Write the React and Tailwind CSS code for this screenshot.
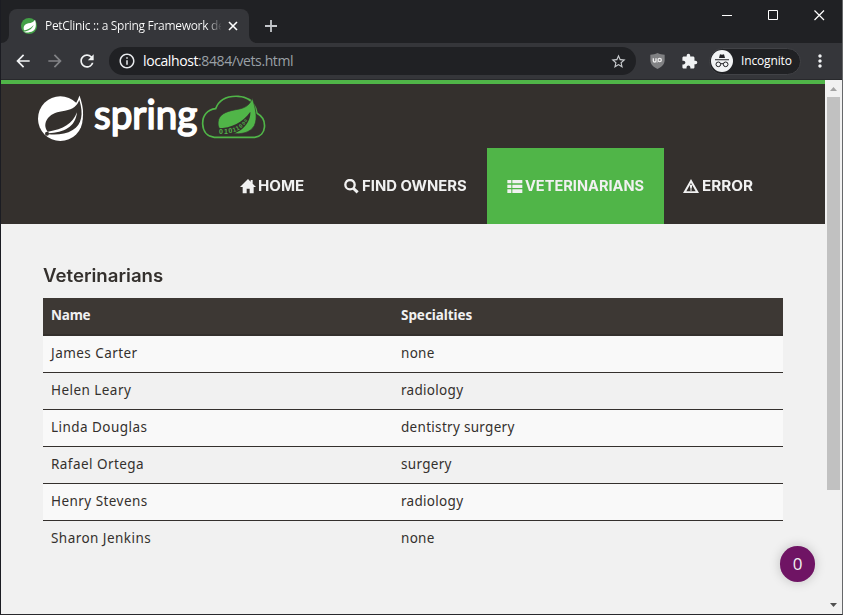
import React from 'react';
import { MdArrowBack, MdArrowForward, MdRefresh, MdInfoOutline, MdStarBorder, MdExtension, MdMoreVert } from 'react-icons/md';

const vets = [
  ['James Carter', 'none'],
  ['Helen Leary', 'radiology'],
  ['Linda Douglas', 'dentistry surgery'],
  ['Rafael Ortega', 'surgery'],
  ['Henry Stevens', 'radiology'],
  ['Sharon Jenkins', 'none'],
];

function Favicon() {
  return (
    <svg className="ml-3 h-4 w-4 shrink-0" viewBox="0 0 48 48">
      <circle cx="24" cy="24" r="24" fill="#43a047" />
      <path d="M42 5C38 13 31 14 22 16C10 19 6 26 9 37C16 36 28 33 38 21C33 34 21 40 8 41C13 45 27 44 36 39C45 33 47 20 42 5Z" fill="#fff" />
    </svg>
  );
}

function TabStrip() {
  return (
    <div className="flex h-[43px] items-start bg-[#202124]">
      <div className="flex w-2 self-stretch items-end bg-[#35363a]">
        <div className="h-full w-2 rounded-br-lg bg-[#202124]" />
      </div>
      <div className="mt-[9px] flex h-[34px] w-[240px] items-center rounded-t-lg bg-[#35363a]">
        <Favicon />
        <div className="ml-2 w-[176px] whitespace-nowrap bg-gradient-to-r from-white from-92% to-[#45464a] bg-clip-text text-[12px] leading-4 tracking-[-0.3px] text-transparent">
          PetClinic :: a Spring Framework de
        </div>
        <svg className="ml-[7px] h-[10px] w-[10px] shrink-0" viewBox="0 0 10 10" stroke="#fff" strokeWidth="1.6">
          <path d="M1 1L9 9M9 1L1 9" />
        </svg>
      </div>
      <div className="flex w-2 self-stretch bg-[#35363a]">
        <div className="h-full w-2 rounded-bl-lg bg-[#202124]" />
      </div>
      <svg className="ml-2 mt-5 h-3 w-3" viewBox="0 0 12 12" stroke="#c4c7cb" strokeWidth="1.8">
        <path d="M6 0V12M0 6H12" />
      </svg>
      <svg className="ml-auto mr-[17px] mt-[10px] h-[11px] w-[103px]" viewBox="0 0 103 11" fill="none" stroke="#fff">
        <path d="M0 5.5H10" />
        <path d="M46.5 .5H55.5V9.5H46.5Z" />
        <path d="M92.5 .5L102 10M102 .5L92.5 10" strokeWidth="1.2" />
      </svg>
    </div>
  );
}

function Toolbar() {
  return (
    <div className="flex h-[37px] items-center border-b border-[#28292c] bg-[#35363a]">
      <MdArrowBack className="ml-3 text-[20px] text-[#f1f3f4]" />
      <MdArrowForward className="ml-3 text-[20px] text-[#828386]" />
      <MdRefresh className="ml-3 text-[20px] text-[#f1f3f4]" />
      <div className="ml-3 flex h-7 w-[527px] items-center rounded-full bg-[#202124] px-[9px]">
        <MdInfoOutline className="text-[18px] text-[#e8eaed]" />
        <div className="ml-[7px] whitespace-nowrap text-[14px] leading-5 text-[#9aa0a6]">
          <span className="tracking-[-0.4px] text-white">localhost</span>
          <span className="tracking-[-0.4px]">:8484/vets.html</span>
        </div>
        <MdStarBorder className="ml-auto text-[17px] text-[#c8cbce]" />
      </div>
      <svg className="ml-[14px] h-4 w-[15px]" viewBox="0 0 45 48">
        <path d="M22.500 0C29 4 36 5 44 5V22C43 37 33 43 22.500 48C12 43 2 37 1 22V5C9 5 16 4 22.500 0Z" fill="#808183" />
        <path d="M10 16V23Q10 27 14 27Q18 27 18 23V16" fill="none" stroke="#eee" strokeWidth="4" />
        <path d="M20 27H23" stroke="#eee" strokeWidth="3" />
        <circle cx="29" cy="21" r="5" fill="none" stroke="#eee" strokeWidth="4" />
      </svg>
      <MdExtension className="ml-4 text-[17px] text-[#f1f3f4]" />
      <div className="ml-[11px] flex h-[27px] w-[92px] items-center rounded-full border border-[#414246] bg-[#202124]">
        <svg className="ml-px h-[22px] w-[22px] shrink-0" viewBox="0 0 66 66">
          <circle cx="33" cy="33" r="33" fill="#f1f3f4" />
          <path d="M24 24L27 13Q33 15 39 13L42 24ZM12 28H54V31H12Z" fill="#202124" />
          <g fill="none" stroke="#202124" strokeWidth="3">
            <circle cx="22" cy="43" r="7" />
            <circle cx="44" cy="43" r="7" />
            <path d="M29 42Q33 39 37 42" />
          </g>
        </svg>
        <span className="ml-2 text-[12px] leading-4 tracking-[-0.15px] text-white">Incognito</span>
      </div>
      <MdMoreVert className="ml-[9px] text-[20px] text-[#f1f3f4]" />
    </div>
  );
}

function SpringLogo() {
  return (
    <svg className="ml-9 h-[49px] w-[230px] overflow-visible" viewBox="51 48 690 147">
      <circle cx="121" cy="122" r="67" fill="#fff" />
      <path d="M178 66C171 84 160 93 135 98C112 102 96 105 84 120C72 136 75 150 82 160C104 170 136 169 158 156C186 139 191 108 178 66Z" fill="#34302d" stroke="#fff" strokeWidth="9" />
      <path d="M178 66C171 84 160 93 135 98C112 102 96 105 84 120C72 136 75 150 82 160L86 169C112 171 138 169 158 156C186 139 191 108 178 66Z" fill="#34302d" />
      <path d="M171 103C158 137 130 154 84 161L85 166C132 164 166 148 171 103Z" fill="#fff" />
      <circle cx="81" cy="167" r="6" fill="#34302d" />
      <text x="222" y="152" textLength="310" lengthAdjust="spacingAndGlyphs" fontFamily="Lato, sans-serif" fontSize="120" fontWeight="400" fill="#fff" stroke="#fff" strokeWidth="5" strokeLinejoin="round">spring</text>
      <path d="M583 178H704C740 174 744 124 711 106C704 68 681 56 655 55C617 53 596 68 587 92C562 95 547 112 548 138C549 161 562 176 583 178Z" fill="none" stroke="#50b548" strokeWidth="5" />
      <path d="M697 61C690 78 681 88 658 93C625 99 604 104 596 124C592 139 595 149 603 157L634 166C664 170 691 164 703 143C714 119 706 89 697 61Z" fill="#50b548" stroke="#34302d" strokeWidth="2" />
      <path d="M592 151C637 149 666 135 691 101C693 132 667 162 632 169L592 171Z" fill="#34302d" />
      <g fontFamily="Liberation Sans, sans-serif" fontSize="21" fontWeight="700" fill="#50b548">
        <text x="597" y="168">0</text>
        <text x="612" y="168">1</text>
        <text x="626" y="166" transform="rotate(-8 626 166)">0</text>
        <text x="640" y="163" fontSize="19" transform="rotate(-18 640 163)">1</text>
        <text x="651" y="158" fontSize="18" transform="rotate(-28 651 158)">1</text>
        <text x="662" y="151" fontSize="16" transform="rotate(-40 662 151)">0</text>
        <text x="672" y="142" fontSize="14" transform="rotate(-50 672 142)">0</text>
        <text x="679" y="133" fontSize="12" transform="rotate(-58 679 133)">0</text>
      </g>
    </svg>
  );
}

function NavIcon({ name }) {
  return (
    <svg className="h-[15px] w-4 shrink-0" viewBox="0 0 48 45" fill="#f1f1f1">
      {name === 'home' && <path d="M24 0L32 8V3H38V14L48 24H41V43H29V29H20V43H8V24H0Z" />}
      {name === 'search' && (
        <g fill="none" stroke="#f1f1f1">
          <circle cx="18" cy="17" r="14" strokeWidth="7" />
          <path d="M27 27L41 40" strokeWidth="9" />
        </g>
      )}
      {name === 'list' && <path d="M1 3H13V13H1ZM16 3H46V13H16ZM1 17H13V27H1ZM16 17H46V27H16ZM1 31H13V42H1ZM16 31H46V42H16Z" />}
      {name === 'warning' && (
        <>
          <path fillRule="evenodd" d="M24 0L48 42H0ZM24 12L10 37H38Z" />
          <path d="M20 17H28L26 29H22ZM22 31H26V35H22Z" />
        </>
      )}
    </svg>
  );
}

function Nav() {
  const link = 'flex h-[76px] items-center gap-[2px] whitespace-nowrap font-[Inter,sans-serif] text-[14px] font-bold leading-5 text-[#f1f1f1]';
  return (
    <nav className="ml-[219px] mt-[5px] flex">
      <div className={link + ' w-[104px] pl-5'}><NavIcon name="home" /><span className="origin-left scale-x-[1.08]">HOME</span></div>
      <div className={link + ' w-[163px] pl-5'}><NavIcon name="search" /><span className="origin-left scale-x-[1.06]">FIND OWNERS</span></div>
      <div className={link + ' w-[177px] bg-[#50b548] pl-5'}><NavIcon name="list" /><span className="origin-left scale-x-[1.04]">VETERINARIANS</span></div>
      <div className={link + ' w-[109px] pl-[19px]'}><NavIcon name="warning" /><span className="ml-px origin-left scale-x-[1.09]">ERROR</span></div>
    </nav>
  );
}

export default function App() {
  return (
    <div className="flex h-[615px] w-[843px] flex-col overflow-hidden border-b border-l border-r border-b-[#28282c] border-l-[#1b1c22] border-r-[#66686a] bg-[#f1f1f1] font-['Open_Sans',sans-serif]">
      <TabStrip />
      <Toolbar />
      <div className="flex min-h-0 flex-1">
        <main className="relative w-[824px]">
          <header className="h-36 border-t-4 border-[#50b548] bg-[#34302d] pt-[10px]">
            <SpringLogo />
            <Nav />
          </header>
          <section className="ml-[42px] w-[740px] pt-[41px]">
            <h2 className="origin-left scale-x-[1.035] font-[Inter,sans-serif] text-[18px] font-semibold leading-[22px] text-[#34302d]">Veterinarians</h2>
            <div className="mt-[11px] font-['Noto_Sans',sans-serif] text-[13.500px] leading-5 text-[#34302d]">
              <div className="flex h-[38px] border-b-2 border-[#34302d] bg-[#3d3834] pl-2 pt-[7px] font-bold text-[#f1f1f1]">
                <div className="w-[350px] tracking-[-0.2px]">Name</div>
                <div className="tracking-[-0.05px]">Specialties</div>
              </div>
              {vets.map(([name, specialty]) => (
                <div key={name} className="flex h-[37px] border-b border-[#34302d] pl-2 pt-[7px] odd:bg-[#f1f1f1] even:bg-[#f9f9f9] last:border-b-0">
                  <div className="w-[350px] tracking-[0.45px]">{name}</div>
                  <div className="tracking-[0.3px]">{specialty}</div>
                </div>
              ))}
            </div>
          </section>
          <div className="absolute bottom-8 right-[10px] flex h-9 w-[35px] items-center justify-center rounded-full bg-[#6f1464] pb-px font-['Open_Sans',sans-serif] text-[17px] text-[#f1f1f1] shadow-[0_0_12px_rgba(0,0,0,0.2)]">0</div>
        </main>
        <div className="flex w-[17px] flex-col items-center bg-[#f1f1f1]">
          <svg className="h-[17px] w-[17px]" viewBox="0 0 17 17"><path d="M5 11L8.500 7L12 11Z" fill="#a3a3a3" /></svg>
          <div className="h-[393px] w-[13px] bg-[#c1c1c1]" />
          <svg className="mt-auto h-[17px] w-[17px]" viewBox="0 0 17 17"><path d="M5 6L8.500 10L12 6Z" fill="#505050" /></svg>
        </div>
      </div>
    </div>
  );
}
